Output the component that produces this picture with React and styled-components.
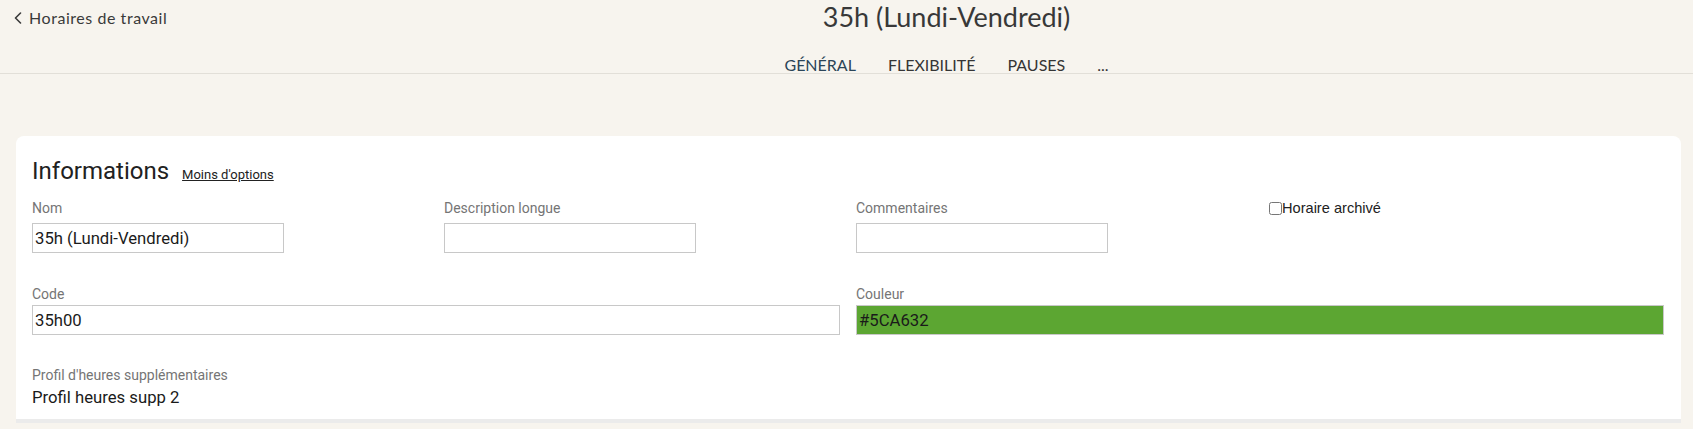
import React from 'react'
import styled, { createGlobalStyle } from 'styled-components'

const GlobalStyle = createGlobalStyle`
    html, body {
        margin: 0;
        padding: 0;
        background: #f7f4ee;
    }
    body {
        font-family: Roboto, "Liberation Sans", Arial, sans-serif;
        color: #222;
    }
`

// Header
const Header = styled.header`
    display: flex;
    height: 73px;
    border-bottom: 1px solid #e2dfd8;
    font-family: Lato, "Open Sans", sans-serif;
`

const BackCol = styled.div`
    width: 200px;
    flex: none;
    padding: 8px 0 0 14px;
    box-sizing: border-box;
`

const BackLink = styled.a`
    display: inline-flex;
    align-items: center;
    gap: 7px;
    font-size: 16px;
    line-height: 20px;
    letter-spacing: 0.55px;
    color: #3a3a3a;
    text-decoration: none;
    cursor: pointer;
`

const CenterCol = styled.div`
    flex: 1;
    display: flex;
    flex-direction: column;
    align-items: center;
    justify-content: space-between;
`

const Title = styled.h1`
    margin: 0;
    font-size: 27px;
    line-height: 34px;
    font-weight: 400;
    color: #383838;
`

const Tabs = styled.nav`
    display: flex;
    gap: 32px;
`

const Tab = styled.a`
    font-size: 16px;
    line-height: 16px;
    text-transform: uppercase;
    color: ${p => (p.$active ? '#2b4558' : '#353535')};
    text-decoration: none;
    cursor: pointer;
`

// Card
const Card = styled.section`
    margin: 62px 12px 0 16px;
    padding: 21px 17px 11px 16px;
    background: #fff;
    border-radius: 8px 8px 0 0;
    border-bottom: 4px solid #ebebeb;
`

const CardHead = styled.div`
    display: flex;
    align-items: baseline;
    gap: 13px;
`

const CardTitle = styled.h2`
    margin: 0;
    font-size: 24px;
    line-height: 28px;
    font-weight: 400;
    color: #212121;
`

const OptionsLink = styled.a`
    font-size: 13px;
    color: #222;
    text-decoration: underline;
    cursor: pointer;
`

const Grid = styled.div`
    display: grid;
    grid-template-columns: repeat(${p => p.$cols}, 1fr);
    column-gap: 16px;
    margin-top: ${p => p.$mt}px;
`

const Field = styled.div`
    display: flex;
    flex-direction: column;
    gap: ${p => p.$gap}px;
`

const Label = styled.label`
    font-size: 14px;
    line-height: 16px;
    color: #757575;
`

const Input = styled.input`
    box-sizing: border-box;
    width: ${p => p.$w || '100%'};
    height: 30px;
    margin: 0;
    padding: 0 2px;
    border: 1px solid #c8c8c8;
    border-radius: 0;
    background: ${p => p.$bg || '#fff'};
    font-family: Roboto, sans-serif;
    font-size: 16.7px;
    color: #1a1a1a;
    outline: none;
`

const CheckLabel = styled.label`
    display: inline-flex;
    align-items: center;
    height: 16px;
    font-family: "Liberation Sans", Arial, sans-serif;
    font-size: 14.6px;
    color: #222;

    input {
        margin: 0 0 0 1px;
        width: 13px;
        height: 13px;
    }
`

const Value = styled.div`
    font-size: 16.7px;
    line-height: 20px;
    color: #1a1a1a;
`

const Chevron = () => (
    <svg width="8" height="12" viewBox="0 0 8 12" fill="none">
        <polyline points="6.5,1 1.5,6 6.5,11" stroke="#3a3a3a" strokeWidth="1.6" strokeLinecap="round" strokeLinejoin="round" />
    </svg>
)

const tabs = ['Général', 'Flexibilité', 'Pauses', '...']

const App = () => {
    return (
        <>
            <GlobalStyle />
            <Header>
                <BackCol>
                    <BackLink><Chevron />Horaires de travail</BackLink>
                </BackCol>
                <CenterCol>
                    <Title>35h (Lundi-Vendredi)</Title>
                    <Tabs>
                        {tabs.map((t, i) => (
                            <Tab key={t} $active={i === 0}>{t}</Tab>
                        ))}
                    </Tabs>
                </CenterCol>
            </Header>

            <Card>
                <CardHead>
                    <CardTitle>Informations</CardTitle>
                    <OptionsLink>Moins d'options</OptionsLink>
                </CardHead>

                <Grid $cols={4} $mt={15}>
                    <Field $gap={7}>
                        <Label>Nom</Label>
                        <Input $w="252px" defaultValue="35h (Lundi-Vendredi)" />
                    </Field>
                    <Field $gap={7}>
                        <Label>Description longue</Label>
                        <Input $w="252px" defaultValue="" />
                    </Field>
                    <Field $gap={7}>
                        <Label>Commentaires</Label>
                        <Input $w="252px" defaultValue="" />
                    </Field>
                    <Field $gap={7}>
                        <CheckLabel><input type="checkbox" />Horaire archivé</CheckLabel>
                    </Field>
                </Grid>

                <Grid $cols={2} $mt={33}>
                    <Field $gap={3}>
                        <Label>Code</Label>
                        <Input defaultValue="35h00" />
                    </Field>
                    <Field $gap={3}>
                        <Label>Couleur</Label>
                        <Input $bg="#5CA632" defaultValue="#5CA632" />
                    </Field>
                </Grid>

                <Grid $cols={1} $mt={32}>
                    <Field $gap={5}>
                        <Label>Profil d'heures supplémentaires</Label>
                        <Value>Profil heures supp 2</Value>
                    </Field>
                </Grid>
            </Card>
        </>
    )
}

export default App
